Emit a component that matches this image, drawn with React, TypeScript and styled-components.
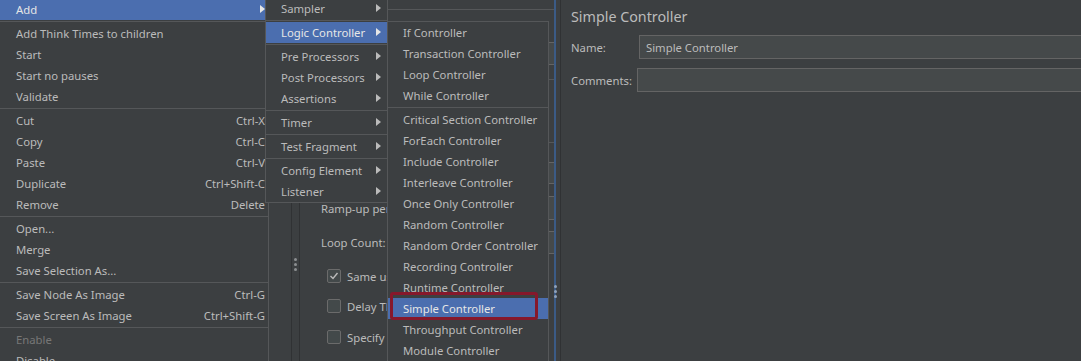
import React, { Fragment } from "react";
import styled, { createGlobalStyle } from "styled-components";

const GlobalStyle = createGlobalStyle`
  html, body {
    margin: 0;
    padding: 0;
    background: #3c3f41;
  }
  body {
    font-family: "Noto Sans", "Open Sans", sans-serif;
    font-size: 11.3px;
    color: #bbbbbb;
  }
`;

const Window = styled.div`
  position: relative;
  display: flex;
  width: 1081px;
  height: 361px;
  overflow: hidden;
  background: #3c3f41;
`;

const TreePane = styled.div`
  flex: none;
  width: 291px;
`;

const SplitHandle = styled.div<{ $top: number }>`
  flex: none;
  width: 7px;
  border-left: 1px solid #303234;
  border-right: 1px solid #303234;
  display: flex;
  flex-direction: column;
  align-items: center;
  gap: 2px;
  padding-top: ${(p) => p.$top}px;
  box-sizing: content-box;
`;

const Dot = styled.span`
  width: 3px;
  height: 3px;
  border-radius: 50%;
  background: #8c8f91;
`;

const ThreadPane = styled.div`
  flex: none;
  width: 254px;
  display: flex;
  flex-direction: column;
  padding-top: 9px;
`;

const GroupLine = styled.div<{ $mt?: number }>`
  margin-top: ${(p) => p.$mt ?? 0}px;
  border-top: 1px solid #555759;
  margin-left: 6px;
`;

const FieldRow = styled.div<{ $mt: number; $h: number }>`
  display: flex;
  align-items: center;
  margin-top: ${(p) => p.$mt}px;
  height: ${(p) => p.$h}px;
  padding-left: 21px;
`;

const FieldLabel = styled.span`
  width: 150px;
  flex: none;
  white-space: nowrap;
`;

const FieldBox = styled.div`
  flex: 1;
  align-self: stretch;
  background: #45494a;
  border: 1px solid #646464;
  border-right: none;
`;

const CheckRow = styled.div<{ $mt: number }>`
  display: flex;
  align-items: center;
  gap: 6px;
  height: 20px;
  margin-top: ${(p) => p.$mt}px;
  padding-left: 27px;
  white-space: nowrap;
`;

const CheckBox = styled.span`
  flex: none;
  width: 12px;
  height: 12px;
  border: 1px solid #6b6b6b;
  border-radius: 2px;
  background: #43494a;
  display: flex;
  align-items: center;
  justify-content: center;
`;

const BlueSplitter = styled.div`
  position: relative;
  flex: none;
  width: 2px;
  background: #3b5b86;
`;

const SplitDots = styled.div`
  position: absolute;
  left: 0;
  top: 285px;
  display: flex;
  flex-direction: column;
  gap: 2px;
`;

const SmallDot = styled.span`
  width: 3px;
  height: 3px;
  border-radius: 50%;
  background: #8fa2bb;
`;

const Gap = styled.div`
  flex: none;
  width: 4px;
`;

const EditorPane = styled.div`
  flex: 1;
  min-width: 0;
  border-left: 1px solid #303234;
  padding: 5px 0 0 10px;
  display: flex;
  flex-direction: column;
  overflow: hidden;
`;

const Title = styled.div`
  font-size: 14.3px;
  line-height: 24px;
  color: #bbbbbb;
`;

const FormRow = styled.div<{ $mt: number }>`
  display: flex;
  align-items: center;
  height: 24px;
  margin-top: ${(p) => p.$mt}px;
`;

const FormLabel = styled.span<{ $w: number }>`
  flex: none;
  width: ${(p) => p.$w}px;
`;

const TextInput = styled.div`
  flex: 1;
  height: 24px;
  box-sizing: border-box;
  margin-right: -20px;
  background: #45494a;
  border: 1px solid #646464;
  padding-left: 6px;
  display: flex;
  align-items: center;
  color: #bbbbbb;
`;

const Menu = styled.div<{ $left: number; $top: number; $width: number }>`
  position: absolute;
  left: ${(p) => p.$left}px;
  top: ${(p) => p.$top}px;
  width: ${(p) => p.$width}px;
  box-sizing: border-box;
  background: #3c3f41;
  border: 1px solid #555759;
  display: flex;
  flex-direction: column;
`;

const Item = styled.div<{ $active?: boolean; $disabled?: boolean; $pl: number; $pr: number }>`
  height: 21px;
  box-sizing: border-box;
  flex: none;
  display: flex;
  align-items: center;
  justify-content: space-between;
  padding: 0 ${(p) => p.$pr}px 1px ${(p) => p.$pl}px;
  white-space: nowrap;
  background: ${(p) => (p.$active ? "#4b6eaf" : "transparent")};
  color: ${(p) => (p.$disabled ? "#777777" : p.$active ? "#e6e6e6" : "#bbbbbb")};
`;

const Arrow = styled.span<{ $active?: boolean }>`
  width: 0;
  height: 0;
  border-top: 4px solid transparent;
  border-bottom: 4px solid transparent;
  border-left: 5px solid ${(p) => (p.$active ? "#e6e6e6" : "#bbbbbb")};
`;

const Separator = styled.div`
  flex: none;
  height: 1px;
  margin: 1px 0;
  background: #555759;
`;

const Highlight = styled.div`
  position: absolute;
  left: 390px;
  top: 292px;
  width: 148px;
  height: 28px;
  box-sizing: border-box;
  border: 3px solid #86182b;
  border-radius: 3px;
`;

type Entry = { label?: string; key?: string; arrow?: boolean; active?: boolean; disabled?: boolean; sep?: boolean };

const SEP: Entry = { sep: true };

const mainMenu: Entry[] = [
  { label: "Add", arrow: true, active: true },
  SEP,
  { label: "Add Think Times to children" },
  { label: "Start" },
  { label: "Start no pauses" },
  { label: "Validate" },
  SEP,
  { label: "Cut", key: "Ctrl-X" },
  { label: "Copy", key: "Ctrl-C" },
  { label: "Paste", key: "Ctrl-V" },
  { label: "Duplicate", key: "Ctrl+Shift-C" },
  { label: "Remove", key: "Delete" },
  SEP,
  { label: "Open..." },
  { label: "Merge" },
  { label: "Save Selection As..." },
  SEP,
  { label: "Save Node As Image", key: "Ctrl-G" },
  { label: "Save Screen As Image", key: "Ctrl+Shift-G" },
  SEP,
  { label: "Enable", disabled: true },
  { label: "Disable" },
];

const addMenu: Entry[] = [
  { label: "Sampler", arrow: true },
  SEP,
  { label: "Logic Controller", arrow: true, active: true },
  SEP,
  { label: "Pre Processors", arrow: true },
  { label: "Post Processors", arrow: true },
  { label: "Assertions", arrow: true },
  SEP,
  { label: "Timer", arrow: true },
  SEP,
  { label: "Test Fragment", arrow: true },
  SEP,
  { label: "Config Element", arrow: true },
  { label: "Listener", arrow: true },
];

const logicMenu: Entry[] = [
  { label: "If Controller" },
  { label: "Transaction Controller" },
  { label: "Loop Controller" },
  { label: "While Controller" },
  SEP,
  { label: "Critical Section Controller" },
  { label: "ForEach Controller" },
  { label: "Include Controller" },
  { label: "Interleave Controller" },
  { label: "Once Only Controller" },
  { label: "Random Controller" },
  { label: "Random Order Controller" },
  { label: "Recording Controller" },
  { label: "Runtime Controller" },
  { label: "Simple Controller", active: true },
  { label: "Throughput Controller" },
  { label: "Module Controller" },
];

const MenuItems = ({ items, pl, pr }: { items: Entry[]; pl: number; pr: number }) => (
  <Fragment>
    {items.map((it, i) =>
      it.sep ? (
        <Separator key={i} />
      ) : (
        <Item key={i} $active={it.active} $disabled={it.disabled} $pl={pl} $pr={pr}>
          <span>{it.label}</span>
          {it.key && <span>{it.key}</span>}
          {it.arrow && <Arrow $active={it.active} />}
        </Item>
      )
    )}
  </Fragment>
);

const Check = () => (
  <svg width="10" height="10" viewBox="0 0 10 10">
    <polyline points="1.5,5 4,7.5 8.5,2" fill="none" stroke="#bbbbbb" strokeWidth="1.4" />
  </svg>
);

export default function App() {
  return (
    <Fragment>
      <GlobalStyle />
      <Window>
        <TreePane />
        <SplitHandle $top={258}>
          <Dot />
          <Dot />
          <Dot />
        </SplitHandle>
        <ThreadPane>
          <GroupLine />
          <FieldRow $mt={32} $h={23}>
            <FieldLabel>Action</FieldLabel>
            <FieldBox />
          </FieldRow>
          <GroupLine $mt={14} />
          <GroupLine $mt={62} />
          <FieldRow $mt={19} $h={22}>
            <FieldLabel>Number of Threads (users):</FieldLabel>
            <FieldBox />
          </FieldRow>
          <FieldRow $mt={12} $h={24}>
            <FieldLabel>Ramp-up period (seconds):</FieldLabel>
            <FieldBox />
          </FieldRow>
          <FieldRow $mt={11} $h={23}>
            <FieldLabel>Loop Count:</FieldLabel>
            <FieldBox />
          </FieldRow>
          <CheckRow $mt={12}>
            <CheckBox>
              <Check />
            </CheckBox>
            <span>Same user on each iteration</span>
          </CheckRow>
          <CheckRow $mt={10}>
            <CheckBox />
            <span>Delay Thread creation until needed</span>
          </CheckRow>
          <CheckRow $mt={11}>
            <CheckBox />
            <span>Specify Thread lifetime</span>
          </CheckRow>
        </ThreadPane>
        <BlueSplitter>
          <SplitDots>
            <SmallDot />
            <SmallDot />
            <SmallDot />
          </SplitDots>
        </BlueSplitter>
        <Gap />
        <EditorPane>
          <Title>Simple Controller</Title>
          <FormRow $mt={6}>
            <FormLabel $w={68}>Name:</FormLabel>
            <TextInput>Simple Controller</TextInput>
          </FormRow>
          <FormRow $mt={9}>
            <FormLabel $w={66}>Comments:</FormLabel>
            <TextInput />
          </FormRow>
        </EditorPane>

        <Menu $left={-1} $top={-2} $width={270}>
          <MenuItems items={mainMenu} pl={16} pr={3} />
        </Menu>
        <Menu $left={265} $top={-3} $width={123}>
          <MenuItems items={addMenu} pl={15} pr={6} />
        </Menu>
        <Menu $left={387} $top={21} $width={162}>
          <MenuItems items={logicMenu} pl={15} pr={6} />
        </Menu>
        <Highlight />
      </Window>
    </Fragment>
  );
}
